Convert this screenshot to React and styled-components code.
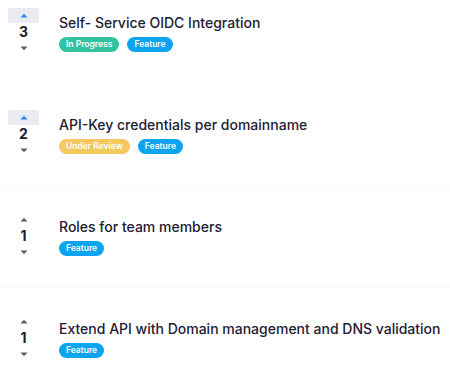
import styled, { createGlobalStyle } from "styled-components";

const GlobalStyle = createGlobalStyle`
  body {
    margin: 0;
    background: #ffffff;
    font-family: Inter, "Noto Sans", sans-serif;
    overflow: hidden;
  }
`;

const requests = [
  { title: "Self- Service OIDC Integration", votes: 3, voted: true, status: "progress", line: "none" },
  { title: "API-Key credentials per domainname", votes: 2, voted: true, status: "review", line: "#fbfbfc" },
  { title: "Roles for team members", votes: 1, voted: false, status: null, line: "#f2f3f5" },
  { title: "Extend API with Domain management and DNS validation", votes: 1, voted: false, status: null, line: "none" },
];

const statusLabels = {
  progress: "In Progress",
  review: "Under Review",
};

const Arrow = ({ up, color }) => (
  <svg width="8" height="5" viewBox="0 0 8 5">
    <path d={up ? "M0.5 4.5 L4 0.8 L7.5 4.5 Z" : "M0.5 0.5 L4 4.2 L7.5 0.5 Z"} fill={color} />
  </svg>
);

const App = () => {
  return (
    <>
      <GlobalStyle />
      <List>
        {requests.map((request, index) => (
          <Row key={index} line={request.line}>
            <Votes>
              <VoteButton active={request.voted}>
                <Arrow up color={request.voted ? "#2f80ed" : "#5b6170"} />
              </VoteButton>
              <Count>{request.votes}</Count>
              <VoteButton>
                <Arrow color="#5b6170" />
              </VoteButton>
            </Votes>
            <Content>
              <Title>{request.title}</Title>
              <Tags>
                {request.status && <Tag kind={request.status}>{statusLabels[request.status]}</Tag>}
                <Tag kind="feature">Feature</Tag>
              </Tags>
            </Content>
          </Row>
        ))}
      </List>
    </>
  );
};

export default App;

const List = styled.div`
  display: flex;
  flex-direction: column;
  margin-top: -19px;
`;

const Row = styled.div`
  display: flex;
  align-items: center;
  height: 102px;
  padding-left: 8px;
  box-sizing: border-box;
  border-bottom: 1px solid ${(props) => (props.line === "none" ? "transparent" : props.line)};
`;

const Votes = styled.div`
  display: flex;
  flex-direction: column;
  align-items: center;
  width: 31px;
  flex-shrink: 0;
`;

const VoteButton = styled.div`
  width: 31px;
  height: 15px;
  border-radius: 2px;
  display: flex;
  align-items: center;
  justify-content: center;
  background: ${(props) => (props.active ? "#e8ebef" : "transparent")};
`;

const Count = styled.div`
  font-size: 14px;
  font-weight: 700;
  line-height: 18px;
  color: #1d2033;
`;

const Content = styled.div`
  display: flex;
  flex-direction: column;
  margin-left: 20px;
`;

const Title = styled.div`
  font-size: 14px;
  font-weight: 500;
  line-height: 21px;
  color: #1d2033;
  white-space: nowrap;
  margin-bottom: 4px;
`;

const Tags = styled.div`
  display: flex;
  gap: 8px;
`;

const tagColors = {
  progress: "#31c3a1",
  review: "#f3c85e",
  feature: "#0ba4ee",
};

const Tag = styled.span`
  display: inline-flex;
  align-items: center;
  height: 15px;
  padding: 0 7px;
  border-radius: 8px;
  background: ${(props) => tagColors[props.kind]};
  color: #ffffff;
  font-size: 8.5px;
  font-weight: 600;
`;
